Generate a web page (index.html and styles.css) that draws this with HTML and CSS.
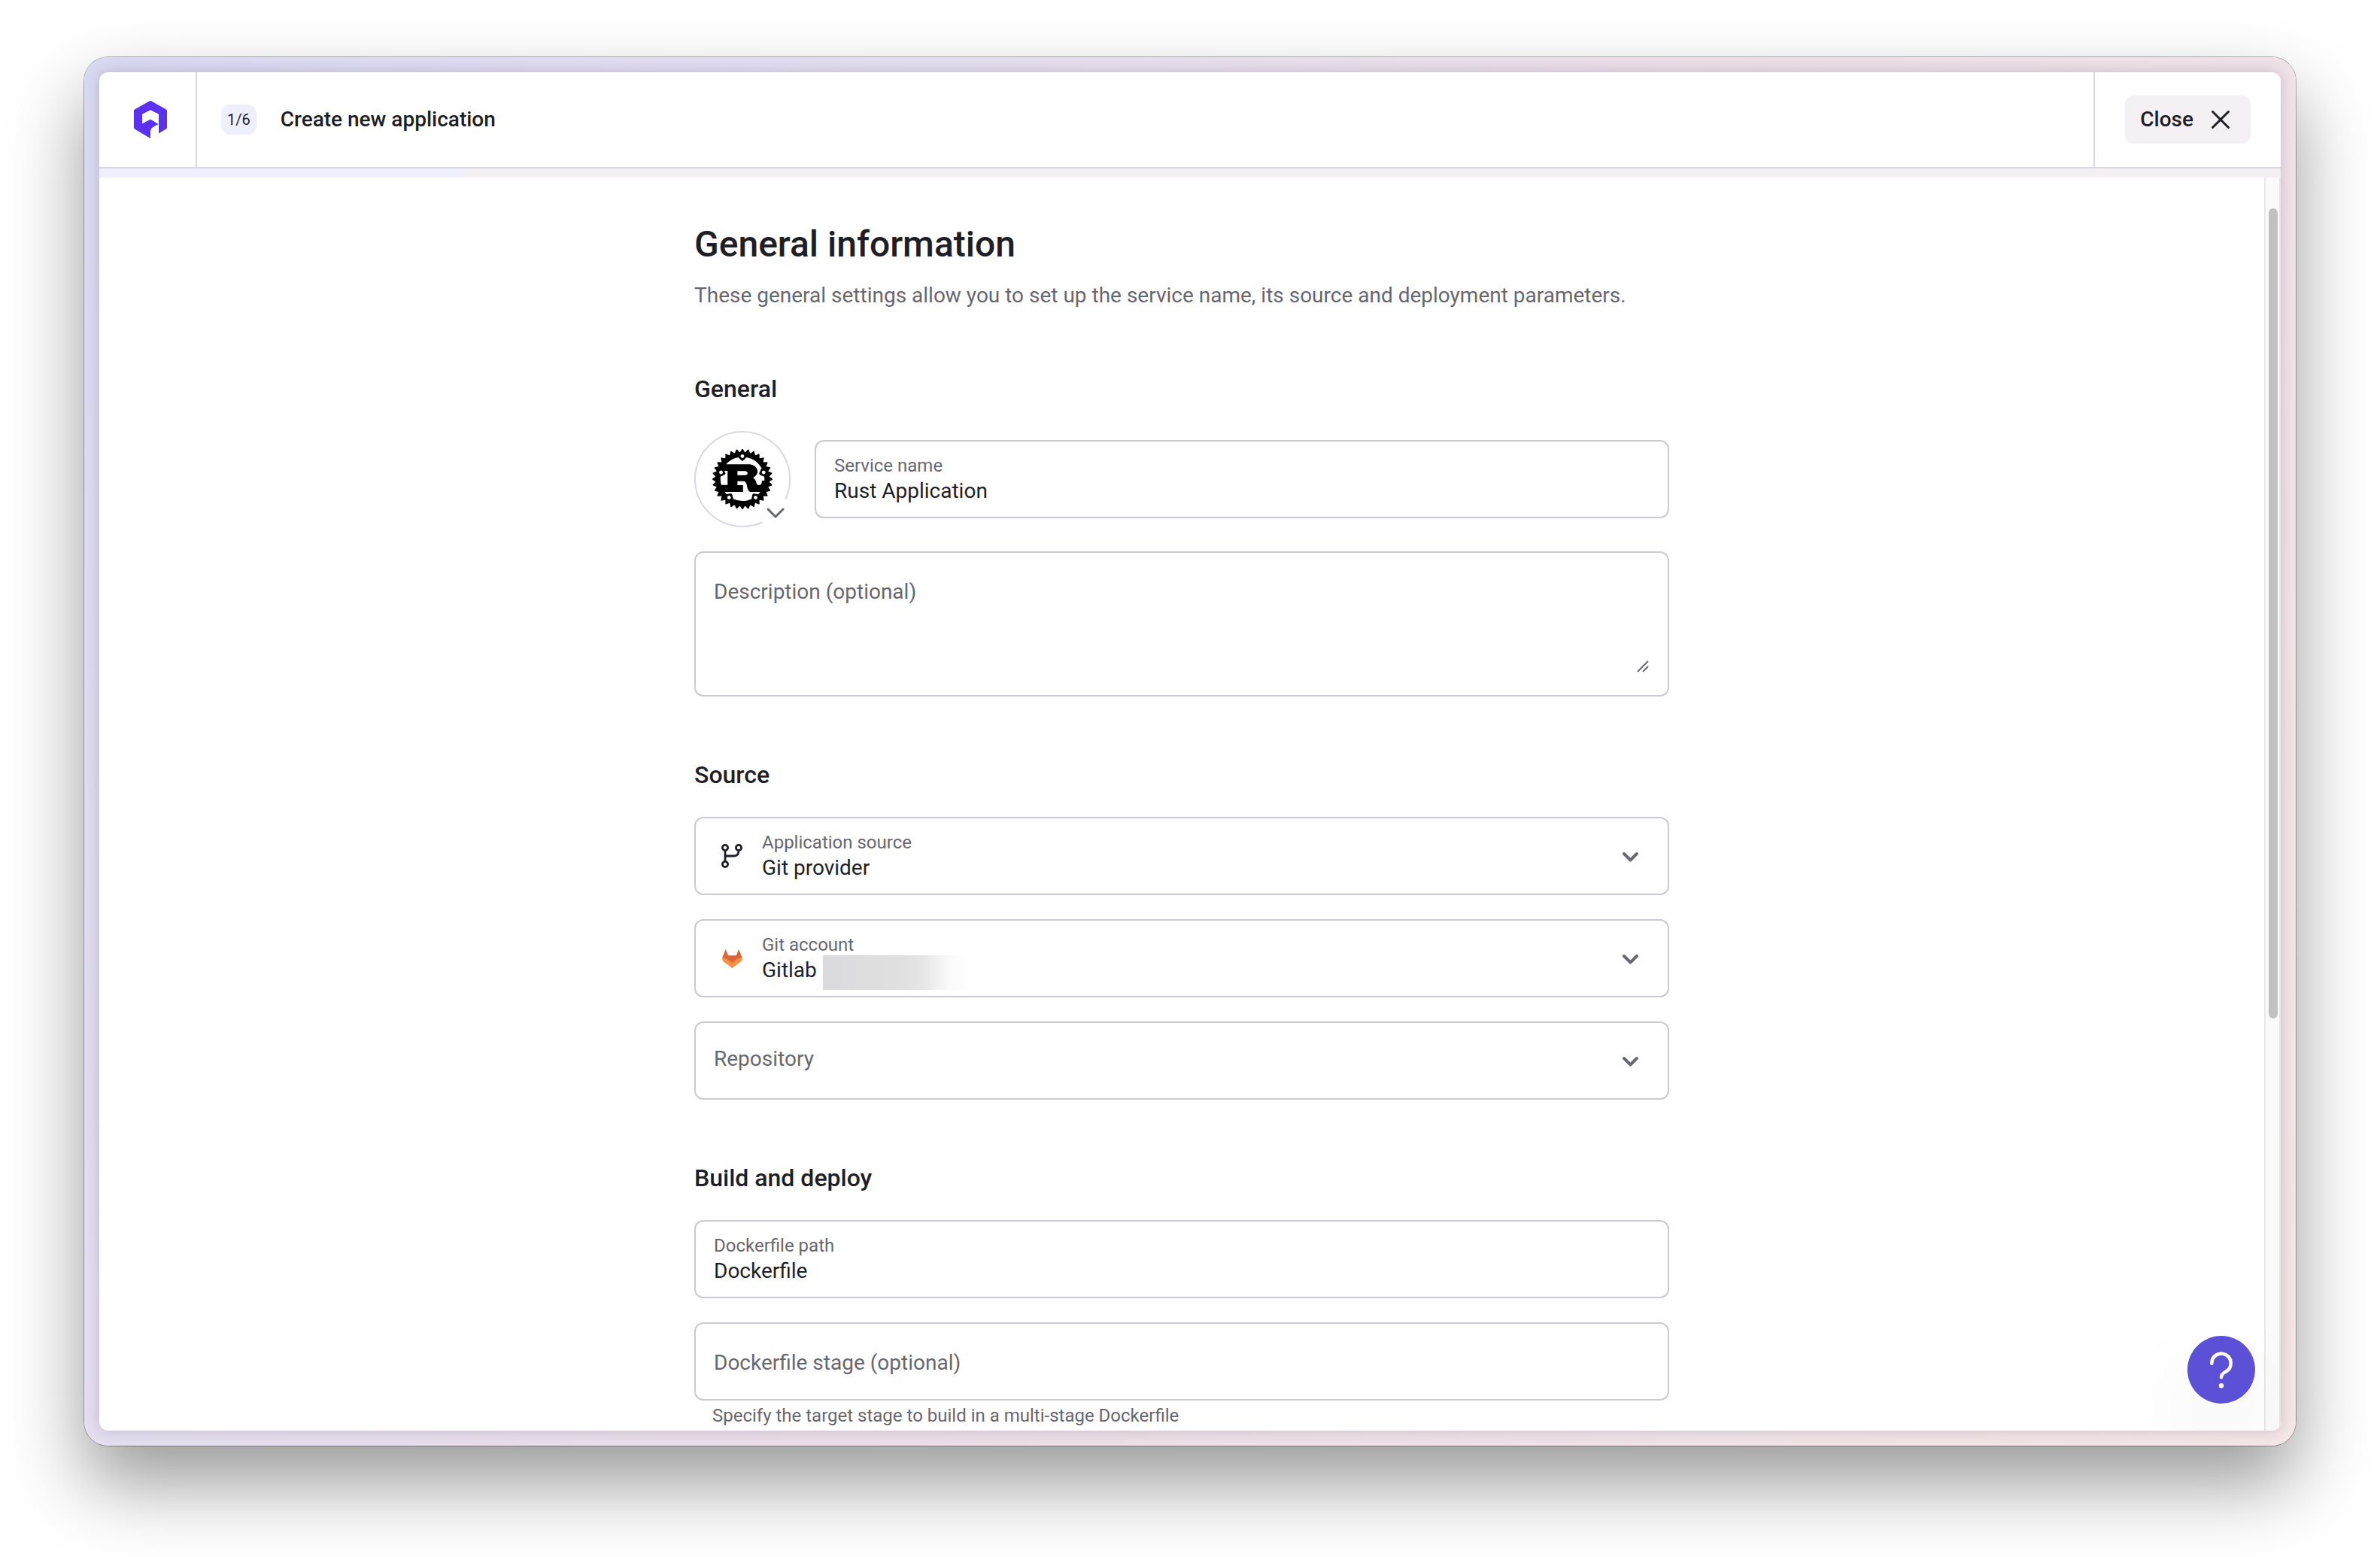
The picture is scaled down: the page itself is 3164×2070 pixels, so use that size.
FILE: index.html
```html
<!DOCTYPE html>
<html lang="en">
<head>
    <meta charset="UTF-8">
    <meta name="viewport" content="width=device-width, initial-scale=1.0">
    <title>Create new application</title>
    <link rel="stylesheet" href="styles.css">
</head>
<body>
    <div class="frame">
        <div class="panel">
            <header class="header">
                <a class="logo" href="#" aria-label="Home">
                    <svg width="44" height="50" viewBox="0 0 44 50" fill="#5b30ef">
                        <path d="M20.5.6Q22-.4 23.500.6L43 11.500Q44 12 44 13.200V35.500Q44 36.500 43 37.200L33 43.500V17.800L22 12.200L11 17.800V30.500L20.800 25.200Q22 24.600 23.200 25.200L32.500 31L25 35.200Q22 37 22 40V50L1 37.600Q0 37 0 35.800V13.200Q0 12 1 11.500Z"/>
                    </svg>
                </a>
                <div class="header-title">
                    <span class="step">1/6</span>
                    <span>Create new application</span>
                </div>
                <div class="header-close">
                    <button type="button" class="close-button">
                        Close
                        <svg width="40" height="40" viewBox="0 0 40 40" fill="none" stroke="#1e1e26" stroke-width="3" stroke-linecap="round">
                            <path d="M9.500 9.500L30.500 30.500M30.500 9.500L9.500 30.500"/>
                        </svg>
                    </button>
                </div>
            </header>
            <div class="progress"><div class="progress-value" style="width: 16.667%"></div></div>

            <div class="body">
                <main class="main">
                    <form class="content">
                        <h1>General information</h1>
                        <p class="intro">These general settings allow you to set up the service name, its source and deployment parameters.</p>

                        <section>
                            <h2>General</h2>
                            <div class="service-row">
                                <button type="button" class="avatar" aria-label="Change icon">
                                    <svg width="80" height="80" viewBox="0 0 24 24">
                                        <path d="M23.8346 11.7033l-1.0073-.6236a13.7268 13.7268 0 00-.0283-.2936l.8656-.8069a.3483.3483 0 00-.1154-.578l-1.1066-.414a8.4958 8.4958 0 00-.087-.2856l.6904-.9587a.3462.3462 0 00-.2257-.5446l-1.1663-.1894a9.3574 9.3574 0 00-.1407-.2622l.49-1.0761a.3437.3437 0 00-.0274-.3361.3486.3486 0 00-.3006-.154l-1.1845.0416a6.7444 6.7444 0 00-.1873-.2268l.2723-1.153a.3472.3472 0 00-.417-.4172l-1.1532.2724a14.0183 14.0183 0 00-.2278-.1873l.0415-1.1845a.3442.3442 0 00-.49-.328l-1.076.491c-.0872-.0476-.1742-.0952-.2623-.1407l-.1903-1.1673A.3483.3483 0 0016.256.955l-.9597.6905a8.4867 8.4867 0 00-.2855-.086l-.414-1.1066a.3483.3483 0 00-.5781-.1154l-.8069.8666a9.2936 9.2936 0 00-.2936-.0284L12.2946.1683a.3462.3462 0 00-.5892 0l-.6236 1.0073a13.7383 13.7383 0 00-.2936.0284L9.9803.3374a.3462.3462 0 00-.578.1154l-.4141 1.1065c-.0962.0274-.1903.0567-.2855.086L7.744.955a.3483.3483 0 00-.5447.2258L7.009 2.348a9.3574 9.3574 0 00-.2622.1407l-1.0762-.491a.3462.3462 0 00-.49.328l.0416 1.1845a7.9826 7.9826 0 00-.2278.1873L3.8413 3.425a.3472.3472 0 00-.4171.4171l.2713 1.1531c-.0628.075-.1255.1509-.1863.2268l-1.1845-.0415a.3462.3462 0 00-.328.49l.491 1.0761a9.167 9.167 0 00-.1407.2622l-1.1662.1894a.3483.3483 0 00-.2258.5446l.6904.9587a13.303 13.303 0 00-.087.2855l-1.1065.414a.3483.3483 0 00-.1155.5781l.8656.807a9.2936 9.2936 0 00-.0283.2935l-1.0073.6236a.3442.3442 0 000 .5892l1.0073.6236c.008.0982.0182.1964.0283.2936l-.8656.8079a.3462.3462 0 00.1155.578l1.1065.4141c.0273.0962.0567.1914.087.2855l-.6904.9587a.3452.3452 0 00.2268.5447l1.1662.1893c.0456.088.0922.1751.1408.2622l-.491 1.0762a.3462.3462 0 00.328.49l1.1834-.0415c.0618.0769.1235.1528.1873.2277l-.2713 1.1541a.3462.3462 0 00.4171.4161l1.153-.2713c.075.0638.151.1255.2279.1863l-.0415 1.1845a.3442.3442 0 00.49.327l1.0761-.49c.087.0486.1741.0951.2622.1407l.1903 1.1662a.3483.3483 0 00.5447.2268l.9587-.6904a9.299 9.299 0 00.2855.087l.414 1.1066a.3452.3452 0 00.5781.1154l.8079-.8656c.0972.0111.1954.0203.2936.0294l.6236 1.0073a.3472.3472 0 00.5892 0l.6236-1.0073c.0982-.0091.1964-.0183.2936-.0294l.8069.8656a.3483.3483 0 00.578-.1154l.4141-1.1066a8.4626 8.4626 0 00.2855-.087l.9587.6904a.3452.3452 0 00.5447-.2268l.1903-1.1662c.088-.0456.1751-.0931.2622-.1407l1.0762.49a.3472.3472 0 00.49-.327l-.0415-1.1845a6.7267 6.7267 0 00.2267-.1863l1.1531.2713a.3472.3472 0 00.4171-.416l-.2713-1.1542c.0628-.0749.1255-.1508.1863-.2278l1.1845.0415a.3442.3442 0 00.328-.49l-.49-1.076c.0475-.0872.0951-.1742.1407-.2623l1.1662-.1893a.3483.3483 0 00.2258-.5447l-.6904-.9587.087-.2855 1.1066-.414a.3462.3462 0 00.1154-.5781l-.8656-.8079c.0101-.0972.0202-.1954.0283-.2936l1.0073-.6236a.3442.3442 0 000-.5892zm-6.7413 8.3551a.7138.7138 0 01.2986-1.396.714.714 0 11-.2997 1.396zm-.3422-2.3142a.649.649 0 00-.7715.5l-.3573 1.6685c-1.1035.501-2.3285.7795-3.6193.7795a8.7368 8.7368 0 01-3.6951-.814l-.3574-1.6684a.648.648 0 00-.7714-.499l-1.473.3158a8.7216 8.7216 0 01-.7613-.898h7.1676c.081 0 .1356-.0141.1356-.088v-2.536c0-.074-.0536-.0881-.1356-.0881h-2.0966v-1.6077h2.2677c.2065 0 1.1065.0587 1.394 1.2088.0901.3533.2875 1.5044.4232 1.8729.1346.413.6833 1.2381 1.2685 1.2381h3.5716a.7492.7492 0 00.1296-.0131 8.7874 8.7874 0 01-.8119.9526zM6.8369 20.024a.714.714 0 11-.2997-1.396.714.714 0 01.2997 1.396zM4.1177 8.9972a.7137.7137 0 11-1.304.5791.7137.7137 0 011.304-.579zm-.8352 1.9813l1.5347-.6824a.65.65 0 00.33-.8585l-.3158-.7147h1.2432v5.6025H3.5669a8.7753 8.7753 0 01-.2834-3.348zm6.7343-.5437V8.7836h2.9601c.153 0 1.0792.1772 1.0792.8697 0 .575-.7107.7815-1.2948.7815zm10.7574 1.4862c0 .2187-.008.4363-.0243.651h-.9c-.09 0-.1265.0586-.1265.1477v.413c0 .973-.5487 1.1846-1.0296 1.2382-.4576.0517-.9648-.1913-1.0275-.4717-.2704-1.5186-.7198-1.8436-1.4305-2.4034.8817-.5599 1.799-1.386 1.799-2.4915 0-1.1936-.819-1.9458-1.3769-2.3153-.7825-.5163-1.6491-.6195-1.883-.6195H5.4682a8.7651 8.7651 0 014.907-2.7699l1.0974 1.151a.648.648 0 00.9182.0213l1.227-1.1743a8.7753 8.7753 0 016.0044 4.2762l-.8403 1.8982a.652.652 0 00.33.8585l1.6178.7188c.0283.2875.0425.577.0425.8717zm-9.3006-9.5993a.7128.7128 0 11.984 1.0316.7137.7137 0 01-.984-1.0316zm8.3389 6.71a.7107.7107 0 01.9395-.3625.7137.7137 0 11-.9405.3635z"/>
                                    </svg>
                                    <span class="avatar-toggle">
                                        <svg width="44" height="44" viewBox="0 0 44 44" fill="none" stroke="#67676f" stroke-width="3" stroke-linecap="round" stroke-linejoin="round">
                                            <path d="M12 18L22 28L32 18"/>
                                        </svg>
                                    </span>
                                </button>
                                <div class="field">
                                    <div class="field-body">
                                        <label for="serviceName">Service name</label>
                                        <input type="text" id="serviceName" name="serviceName" value="Rust Application">
                                    </div>
                                </div>
                            </div>
                            <div class="field field-textarea">
                                <textarea name="description" placeholder="Description (optional)" aria-label="Description (optional)"></textarea>
                                <svg class="grip" width="16" height="16" viewBox="0 0 16 16" fill="none" stroke="#67676f" stroke-width="2">
                                    <path d="M1 15L15 1M8 15L15 8"/>
                                </svg>
                            </div>
                        </section>

                        <section>
                            <h2>Source</h2>
                            <div class="field">
                                <span class="field-icon">
                                    <svg width="28" height="32" viewBox="0 0 28 32" fill="none" stroke="#1e1e26" stroke-width="2.800">
                                        <circle cx="5" cy="5" r="3.600"/>
                                        <circle cx="23" cy="5" r="3.600"/>
                                        <circle cx="5" cy="27" r="3.600"/>
                                        <path d="M5 8.600V23.400M5 16H17Q23 16 23 8.600"/>
                                    </svg>
                                </span>
                                <div class="field-body">
                                    <label for="source">Application source</label>
                                    <select id="source" name="source">
                                        <option>Git provider</option>
                                    </select>
                                </div>
                                <svg class="chevron" width="48" height="48" viewBox="0 0 48 48"><path d="M14 21L22.500 29.500L31 21"/></svg>
                            </div>
                            <div class="field">
                                <span class="field-icon">
                                    <svg width="27" height="25" viewBox="0 0 27 25">
                                        <path fill="#dd6339" d="M4.700 0L7.900 8.300H18.900L22 0L26.500 11L13.400 25L.3 11Z"/>
                                        <path fill="#f59140" d="M.3 11Q-.5 14.500 2 16.500L13.400 25L24.800 16.500Q27.300 14.500 26.500 11L20.500 12.500L13.400 18.300L6.300 12.500Z"/>
                                    </svg>
                                </span>
                                <div class="field-body">
                                    <label for="account">Git account</label>
                                    <select id="account" name="account">
                                        <option>Gitlab</option>
                                    </select>
                                    <span class="account-mask"></span>
                                </div>
                                <svg class="chevron" width="48" height="48" viewBox="0 0 48 48"><path d="M14 21L22.500 29.500L31 21"/></svg>
                            </div>
                            <div class="field">
                                <div class="field-body">
                                    <select class="empty" name="repository" aria-label="Repository">
                                        <option>Repository</option>
                                    </select>
                                </div>
                                <svg class="chevron" width="48" height="48" viewBox="0 0 48 48"><path d="M14 21L22.500 29.500L31 21"/></svg>
                            </div>
                        </section>

                        <section>
                            <h2>Build and deploy</h2>
                            <div class="field">
                                <div class="field-body">
                                    <label for="dockerfilePath">Dockerfile path</label>
                                    <input type="text" id="dockerfilePath" name="dockerfilePath" value="Dockerfile">
                                </div>
                            </div>
                            <div class="field">
                                <div class="field-body">
                                    <input class="empty-input" type="text" name="dockerfileStage" placeholder="Dockerfile stage (optional)" aria-label="Dockerfile stage (optional)" aria-describedby="stageHint">
                                </div>
                            </div>
                            <p class="hint" id="stageHint">Specify the target stage to build in a multi-stage Dockerfile</p>
                        </section>
                    </form>
                </main>
                <div class="scrollbar"><div class="scrollbar-thumb"></div></div>
            </div>

            <button type="button" class="help-button" aria-label="Help">
                <svg width="90" height="90" viewBox="0 0 90 90" fill="none" stroke="#fff" stroke-width="4.500" stroke-linecap="round">
                    <path d="M32.300 36.800V36.300A12.700 12.700 0 1 1 51.500 47.200C47 49.500 45 51.200 45 55"/>
                    <circle cx="45" cy="66.300" r="3.200" fill="#fff" stroke="none"/>
                </svg>
            </button>
        </div>
    </div>
</body>
</html>
```
FILE: styles.css
```css
* {
    box-sizing: border-box;
}
body {
    display: flex;
    min-height: 100vh;
    margin: 0;
    padding: 76px 112px 148px;
    font-family: Roboto, Arial, sans-serif;
    font-size: 28px;
    line-height: 36px;
    color: #1e1e26;
    background-color: #fff;
}
button,
input,
select,
textarea {
    font: inherit;
    color: inherit;
    margin: 0;
    padding: 0;
    border: 0;
    outline: 0;
    background: none;
}
svg {
    display: block;
    flex: none;
}

/* Window */
.frame {
    display: flex;
    flex: 1;
    padding: 20px;
    border-radius: 32px;
    background: linear-gradient(120deg, #dad9f3 0%, #e5dff0 27%, #eddfe8 54%, #f0e3e8 73%, #f5e6e7 100%);
    box-shadow: 0 0 0 1px rgba(0, 0, 0, 0.3), 0 50px 100px rgba(0, 0, 0, 0.4);
}
.panel {
    position: relative;
    display: flex;
    flex-direction: column;
    flex: 1;
    overflow: hidden;
    border-radius: 12px;
    background-color: #fff;
    box-shadow: 0 0 20px rgba(40, 30, 60, 0.2);
}

/* Header */
.header {
    display: flex;
    height: 128px;
    border-bottom: 2px solid #dad9e2;
    font-weight: 500;
}
.logo {
    display: flex;
    align-items: center;
    justify-content: center;
    width: 130px;
    padding-left: 8px;
    border-right: 2px solid #dad9e2;
}
.header-title {
    display: flex;
    flex: 1;
    align-items: center;
    gap: 32px;
    padding: 0 32px;
}
.step {
    padding: 0 8px;
    border-radius: 12px;
    background-color: #eef0ff;
    font-size: 20px;
    font-weight: 400;
    line-height: 40px;
}
.header-close {
    display: flex;
    align-items: center;
    padding: 0 40px;
    border-left: 2px solid #dad9e2;
}
.close-button {
    display: flex;
    align-items: center;
    gap: 16px;
    height: 64px;
    padding: 0 20px;
    border-radius: 12px;
    background-color: #f4f0f4;
    font-weight: 500;
    cursor: pointer;
}
.progress {
    height: 12px;
    background-color: #f4eff3;
}
.progress-value {
    height: 100%;
    background-color: #eef0ff;
}

/* Content */
.body {
    display: flex;
    flex: 1;
}
.main {
    flex: 1;
    padding-top: 61px;
}
.content {
    max-width: 1296px;
    margin: 0 auto;
}
h1 {
    margin: 0 0 20px;
    font-size: 48px;
    font-weight: 500;
    line-height: 56px;
}
h2 {
    margin: 0 0 36px;
    font-size: 32px;
    font-weight: 500;
    line-height: 40px;
}
.intro {
    margin: 0;
    line-height: 40px;
    color: #67676f;
}
section {
    margin-top: 84px;
}
.service-row {
    display: flex;
    align-items: center;
    gap: 32px;
    margin-bottom: 32px;
}
.avatar {
    position: relative;
    display: flex;
    flex: none;
    align-items: center;
    justify-content: center;
    width: 128px;
    height: 128px;
    border: 2px solid #dad9e2;
    border-radius: 50%;
    cursor: pointer;
}
.avatar-toggle {
    position: absolute;
    right: -4px;
    bottom: -4px;
    border-radius: 50%;
    background-color: #fff;
}

/* Fields */
.field {
    position: relative;
    display: flex;
    flex: 1;
    align-items: center;
    height: 104px;
    padding: 0 24px;
    border: 2px solid #cacad3;
    border-radius: 12px;
}
.field + .field {
    margin-top: 32px;
}
.field-icon {
    display: flex;
    justify-content: center;
    width: 48px;
    margin-right: 16px;
}
.field-body {
    position: relative;
    display: flex;
    flex: 1;
    flex-direction: column;
}
.field label {
    font-size: 24px;
    line-height: 32px;
    color: #67676f;
}
.field input,
.field select {
    width: 100%;
    height: 36px;
    line-height: 36px;
    appearance: none;
}
.field .empty {
    height: 100px;
    padding-bottom: 4px;
    color: #67676f;
}
.field .empty-input {
    height: 100px;
    padding-top: 2px;
}
.field ::placeholder {
    color: #67676f;
    opacity: 1;
}
.field-textarea {
    height: 193px;
}
.field textarea {
    align-self: stretch;
    width: 100%;
    padding-top: 34px;
    resize: none;
}
.grip {
    position: absolute;
    right: 25px;
    bottom: 30px;
}
.chevron {
    fill: none;
    stroke: #67676f;
    stroke-width: 4;
    stroke-linecap: round;
    stroke-linejoin: round;
}
/* Hides the account name */
.account-mask {
    position: absolute;
    left: 81px;
    bottom: -8px;
    width: 196px;
    height: 46px;
    background: linear-gradient(to right, #dadadc, #e0e0e0 55%, #e6e6e6 68%, #fafafa 86%, #fff);
}
.hint {
    margin: 4px 0 0;
    padding-left: 24px;
    font-size: 24px;
    line-height: 32px;
    color: #67676f;
}

.scrollbar {
    width: 22px;
    padding: 41px 2px 0 4px;
    border: solid #e8e8e8;
    border-width: 0 2px;
    background-color: #fafafa;
}
.scrollbar-thumb {
    width: 12px;
    height: 66.3%;
    border-radius: 6px;
    background-color: #c1c1c1;
}
.help-button {
    position: absolute;
    right: 34px;
    bottom: 36px;
    border-radius: 50%;
    background-color: #5b50d6;
    box-shadow: 0 50px 120px rgba(0, 0, 0, 0.08);
    cursor: pointer;
}
```
